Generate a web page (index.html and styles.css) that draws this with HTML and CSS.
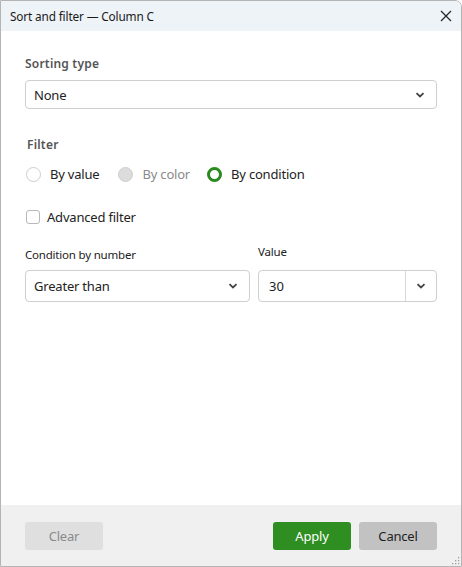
FILE: index.html
```html
<!DOCTYPE html>
<html>
<head>
<meta charset="utf-8">
<link rel="stylesheet" href="styles.css">
</head>
<body>
<div class="window">
  <div class="titlebar">
    <span class="title">Sort and filter — Column C</span>
    <span class="close"><svg width="12" height="12" viewBox="0 0 12 12"><path d="M1 1L11 11M11 1L1 11" stroke="#222" stroke-width="1.2" fill="none"/></svg></span>
  </div>
  <div class="content">
    <div class="section-label">Sorting type</div>
    <div class="select">
      <span>None</span>
      <svg class="chev" width="10" height="6" viewBox="0 0 10 6"><path d="M1.5 1.2L5 4.5L8.5 1.2" stroke="#444" stroke-width="1.8" fill="none"/></svg>
    </div>
    <div class="section-label filter-label">Filter</div>
    <div class="radios">
      <label class="radio"><span class="dot"></span>By value</label>
      <label class="radio disabled"><span class="dot"></span>By color</label>
      <label class="radio checked"><span class="dot"></span>By condition</label>
    </div>
    <label class="check"><span class="box"></span>Advanced filter</label>
    <div class="cond-row">
      <div class="field field-left">
        <div class="field-label">Condition by number</div>
        <div class="select tall">
          <span>Greater than</span>
          <svg class="chev" width="10" height="6" viewBox="0 0 10 6"><path d="M1.5 1.2L5 4.5L8.5 1.2" stroke="#444" stroke-width="1.8" fill="none"/></svg>
        </div>
      </div>
      <div class="field field-right">
        <div class="field-label">Value</div>
        <div class="combo">
          <span class="combo-text">30</span>
          <span class="combo-btn"><svg width="10" height="6" viewBox="0 0 10 6"><path d="M1.5 1.2L5 4.5L8.5 1.2" stroke="#444" stroke-width="1.8" fill="none"/></svg></span>
        </div>
      </div>
    </div>
  </div>
  <div class="footer">
    <button class="btn clear">Clear</button>
    <div class="spacer"></div>
    <button class="btn apply">Apply</button>
    <button class="btn cancel">Cancel</button>
  </div>
  <span class="grip"><svg width="8" height="8" viewBox="0 0 8 8" fill="#a0a0a0"><rect x="6" y="0" width="1.3" height="1.3"/><rect x="3" y="3" width="1.3" height="1.3"/><rect x="6" y="3" width="1.3" height="1.3"/><rect x="0" y="6" width="1.3" height="1.3"/><rect x="3" y="6" width="1.3" height="1.3"/><rect x="6" y="6" width="1.3" height="1.3"/></svg></span>
</div>
</body>
</html>
```
FILE: styles.css
```css
* { box-sizing: border-box; }
html, body { margin: 0; padding: 0; background: #ffffff; }
body {
  font-family: "Noto Sans", "Open Sans", sans-serif;
  color: #1e1e1e;
  width: 462px;
  height: 567px;
  overflow: hidden;
}
.window {
  position: relative;
  width: 462px;
  height: 567px;
  border: 1px solid #b4b4b4;
  border-top-right-radius: 7px;
  display: flex;
  flex-direction: column;
  background: #fff;
  overflow: hidden;
}
.titlebar {
  height: 30px;
  background: #eef3f7;
  display: flex;
  align-items: center;
  justify-content: space-between;
  padding: 0 9px 0 9px;
  flex: none;
}
.title { font-size: 11.8px; color: #1a1a1a; letter-spacing: -0.15px; }
.close { display: flex; align-items: center; }
.content {
  flex: 1;
  padding: 25px 24px 0 24px;
  display: flex;
  flex-direction: column;
}
.section-label {
  font-size: 12px;
  font-weight: 600;
  color: #555;
  letter-spacing: 0.2px;
  line-height: 16px;
}
.select {
  margin-top: 8px;
  height: 29px;
  border: 1px solid #cfcfcf;
  border-radius: 4px;
  display: flex;
  align-items: center;
  justify-content: space-between;
  padding: 0 11px 0 8px;
  font-size: 13px;
  letter-spacing: -0.2px;
  color: #222;
}
.select.tall { height: 32px; margin-top: 7px; }
.filter-label { margin-top: 28px; padding-left: 2px; }
.radios {
  margin-top: 12px;
  display: flex;
  align-items: center;
  height: 18px;
}
.radio {
  display: flex;
  align-items: center;
  font-size: 13px;
  letter-spacing: -0.2px;
  color: #222;
  margin-right: 18px;
  padding-left: 1px;
}
.radio .dot {
  width: 15px;
  height: 15px;
  border-radius: 50%;
  border: 1px solid #cdcdcd;
  background: #fff;
  margin-right: 9px;
}
.radio.disabled { color: #8a8a8a; margin-right: 16px; }
.radio.disabled .dot { background: #dcdcdc; border-color: #cfcfcf; }
.radio.checked .dot { border: 3.5px solid #2b8a1f; }
.check {
  margin-top: 25px;
  display: flex;
  align-items: center;
  font-size: 13px;
  letter-spacing: -0.2px;
  color: #222;
  padding-left: 1px;
}
.check .box {
  width: 14px;
  height: 14px;
  border: 1px solid #b8b8b8;
  border-radius: 3px;
  margin-right: 7px;
}
.cond-row {
  margin-top: 21px;
  display: flex;
  gap: 8px;
}
.field-left { width: 225px; }
.field-right { flex: 1; }
.field-label { font-size: 11.5px; color: #222; letter-spacing: -0.2px; line-height: 16px; }
.field-right .field-label { margin-top: -3px; }
.combo {
  margin-top: 7px;
  height: 32px;
  border: 1px solid #cfcfcf;
  border-radius: 4px;
  display: flex;
  align-items: stretch;
  font-size: 13px;
  color: #222;
}
.field-right .combo { margin-top: 10px; }
.combo-text { flex: 1; display: flex; align-items: center; padding-left: 10px; }
.combo-btn {
  width: 31px;
  border-left: 1px solid #d8d8d8;
  display: flex;
  align-items: center;
  justify-content: center;
}
.footer {
  height: 61px;
  flex: none;
  background: #f0f0f0;
  display: flex;
  align-items: center;
  padding: 0 24px;
  gap: 8px;
}
.spacer { flex: 1; }
.btn {
  width: 78px;
  height: 28px;
  border: none;
  border-radius: 3px;
  font-family: "Noto Sans", "Open Sans", sans-serif;
  font-size: 13px;
  letter-spacing: -0.2px;
  padding: 0;
}
.clear { background: #dfdfe0; color: #8a8a8a; }
.apply { background: #2e8e22; color: #fff; }
.cancel { background: #c2c2c3; color: #1e1e1e; }
.grip { position: absolute; right: 1px; bottom: 1px; display: flex; }
```
